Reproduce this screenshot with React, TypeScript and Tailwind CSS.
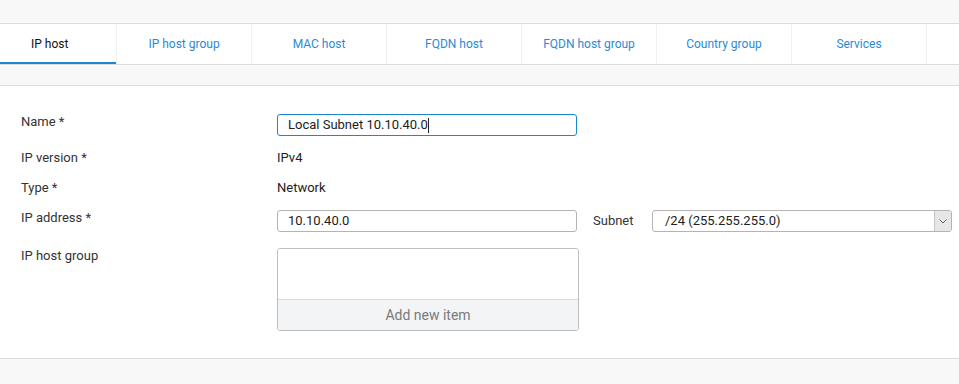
import React from "react";

const tabs = ["IP host group", "MAC host", "FQDN host", "FQDN host group", "Country group", "Services"];

export default function App() {
  return (
    <div className="w-[959px] h-[384px] bg-[#f8f8f8] overflow-hidden text-[#333]" style={{ fontFamily: "Roboto, 'Liberation Sans', sans-serif" }}>
      <div className="h-[24px] border-b border-[#dcdcdc]" />
      <div className="h-[41px] bg-white border-b border-[#dcdcdc] flex">
        <div className="w-[117px] h-[40px] border-r border-[#f0f0f0] relative flex items-center pl-[31px] text-[12px] text-[#111]">
          IP host
          <div className="absolute left-0 right-0 bottom-0 h-[2px] bg-[#1f87d1]" />
        </div>
        {tabs.map((t) => (
          <div key={t} className="w-[135px] h-[40px] border-r border-[#f0f0f0] flex items-center justify-center text-[12px] text-[#2a8bd3]">
            {t}
          </div>
        ))}
      </div>
      <div className="h-[21px] border-b border-[#dcdcdc]" />
      <div className="h-[273px] bg-white border-b border-[#dcdcdc] pt-[28px] text-[13px]">
        <div className="flex items-start h-[22px]">
          <div className="w-[277px] pl-[21px] leading-[16px]">Name *</div>
          <div className="w-[300px] h-[22px] border border-[#1c86d0] rounded-[3px] pl-[10px] flex items-center text-[#222]">
            Local Subnet 10.10.40.0<span className="inline-block w-px h-[15px] bg-[#222]" />
          </div>
        </div>
        <div className="flex items-start h-[16px] mt-[14px] leading-[16px]">
          <div className="w-[277px] pl-[21px]">IP version *</div>
          <div className="text-[#222]">IPv4</div>
        </div>
        <div className="flex items-start h-[16px] mt-[14px] leading-[16px]">
          <div className="w-[277px] pl-[21px]">Type *</div>
          <div className="text-[#222]">Network</div>
        </div>
        <div className="flex items-start h-[22px] mt-[14px]">
          <div className="w-[277px] pl-[21px] leading-[16px]">IP address *</div>
          <div className="w-[300px] h-[22px] border border-[#b4b4b4] rounded-[3px] pl-[10px] flex items-center text-[#222]">
            10.10.40.0
          </div>
          <div className="w-[75px] pl-[16px] leading-[16px] pt-[3px]">Subnet</div>
          <div className="w-[300px] h-[22px] border border-[#b4b4b4] rounded-[3px] flex items-stretch text-[#222] overflow-hidden">
            <div className="flex-1 pl-[12px] flex items-center">/24 (255.255.255.0)</div>
            <div className="w-[17px] bg-[#e6e6e6] border-l border-[#c4c4c4] flex items-center justify-center">
              <svg width="8" height="5" viewBox="0 0 8 5"><path d="M0.5 0.5 L4 4 L7.5 0.5" fill="none" stroke="#666" strokeWidth="1" /></svg>
            </div>
          </div>
        </div>
        <div className="flex items-start mt-[16px]">
          <div className="w-[277px] pl-[21px] leading-[16px]">IP host group</div>
          <div className="w-[302px] h-[83px] border border-[#bdbdbd] rounded-[3px] flex flex-col overflow-hidden">
            <div className="h-[51px] bg-white border-b border-[#d8d8d8]" />
            <div className="flex-1 bg-[#f3f4f6] flex items-center justify-center text-[14px] text-[#7a7a7a]">Add new item</div>
          </div>
        </div>
      </div>
    </div>
  );
}
